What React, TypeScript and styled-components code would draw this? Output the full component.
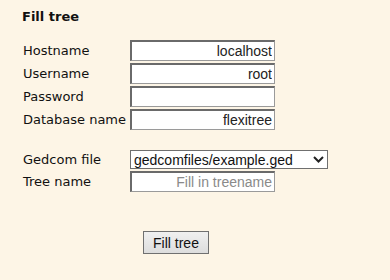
import React from 'react';
import styled, { createGlobalStyle } from 'styled-components';

const GlobalStyle = createGlobalStyle`
  html, body {
    margin: 0;
    padding: 0;
    background: #fdf5e6;
  }
`;

const Page = styled.div`
  padding: 8px 0 0 22px;
  font-family: "DejaVu Sans", Verdana, sans-serif;
  font-size: 13px;
  color: #111;
`;

const Title = styled.h3`
  margin: 0;
  font-size: 13px;
  font-weight: bold;
  line-height: 18px;
`;

const Form = styled.div`
  display: grid;
  grid-template-columns: 108px auto;
  row-gap: 2px;
  margin-top: 14px;
  align-items: center;
  justify-items: start;
`;

const Label = styled.label<{ $compact?: boolean }>`
  padding-left: 1px;
  line-height: ${p => (p.$compact ? '19px' : '21px')};
  white-space: nowrap;
`;

const Spacer = styled.div`
  grid-column: 1 / 3;
  height: 16px;
`;

const TextInput = styled.input`
  box-sizing: border-box;
  width: 145px;
  height: 21px;
  margin: 0;
  padding: 0 2px;
  border-style: solid;
  border-width: 2px 1px 1px 2px;
  border-color: #6a6a6a #9a9a9a #9a9a9a #6a6a6a;
  background: #fff;
  font-family: "Liberation Sans", Arial, sans-serif;
  font-size: 14px;
  color: #222;
  text-align: right;
  outline: none;

  &::placeholder {
    color: #8a8a8a;
  }
`;

const SelectWrap = styled.div`
  position: relative;
  width: 198px;
  height: 19px;
`;

const Select = styled.select`
  appearance: none;
  box-sizing: border-box;
  width: 100%;
  height: 19px;
  margin: 0;
  padding: 0 0 0 3px;
  border: 1px solid #6f6f6f;
  border-radius: 0;
  background: #fff;
  font-family: "Liberation Sans", Arial, sans-serif;
  font-size: 14px;
  color: #111;
  outline: none;
`;

const Chevron = styled.svg`
  position: absolute;
  right: 4px;
  top: 6px;
  pointer-events: none;
`;

const Button = styled.button`
  display: block;
  margin: 39px 0 0 121px;
  box-sizing: border-box;
  width: 66px;
  height: 23px;
  padding: 0;
  border: 1px solid #707070;
  background: linear-gradient(#f0f0f0, #dddddd);
  font-family: "Liberation Sans", Arial, sans-serif;
  font-size: 14px;
  color: #111;
`;

const App = () => {
  return (
    <>
      <GlobalStyle />
      <Page>
        <Title>Fill tree</Title>
        <Form>
          <Label>Hostname</Label>
          <TextInput defaultValue="localhost" />
          <Label>Username</Label>
          <TextInput defaultValue="root" />
          <Label>Password</Label>
          <TextInput type="password" />
          <Label>Database name</Label>
          <TextInput defaultValue="flexitree" />
          <Spacer />
          <Label $compact>Gedcom file</Label>
          <SelectWrap>
            <Select defaultValue="gedcomfiles/example.ged">
              <option>gedcomfiles/example.ged</option>
            </Select>
            <Chevron width="11" height="7" viewBox="0 0 11 7">
              <path d="M1 1 L5.5 5.5 L10 1" fill="none" stroke="#222" strokeWidth="2" />
            </Chevron>
          </SelectWrap>
          <Label>Tree name</Label>
          <TextInput placeholder="Fill in treename" />
        </Form>
        <Button>Fill tree</Button>
      </Page>
    </>
  );
};

export default App;
